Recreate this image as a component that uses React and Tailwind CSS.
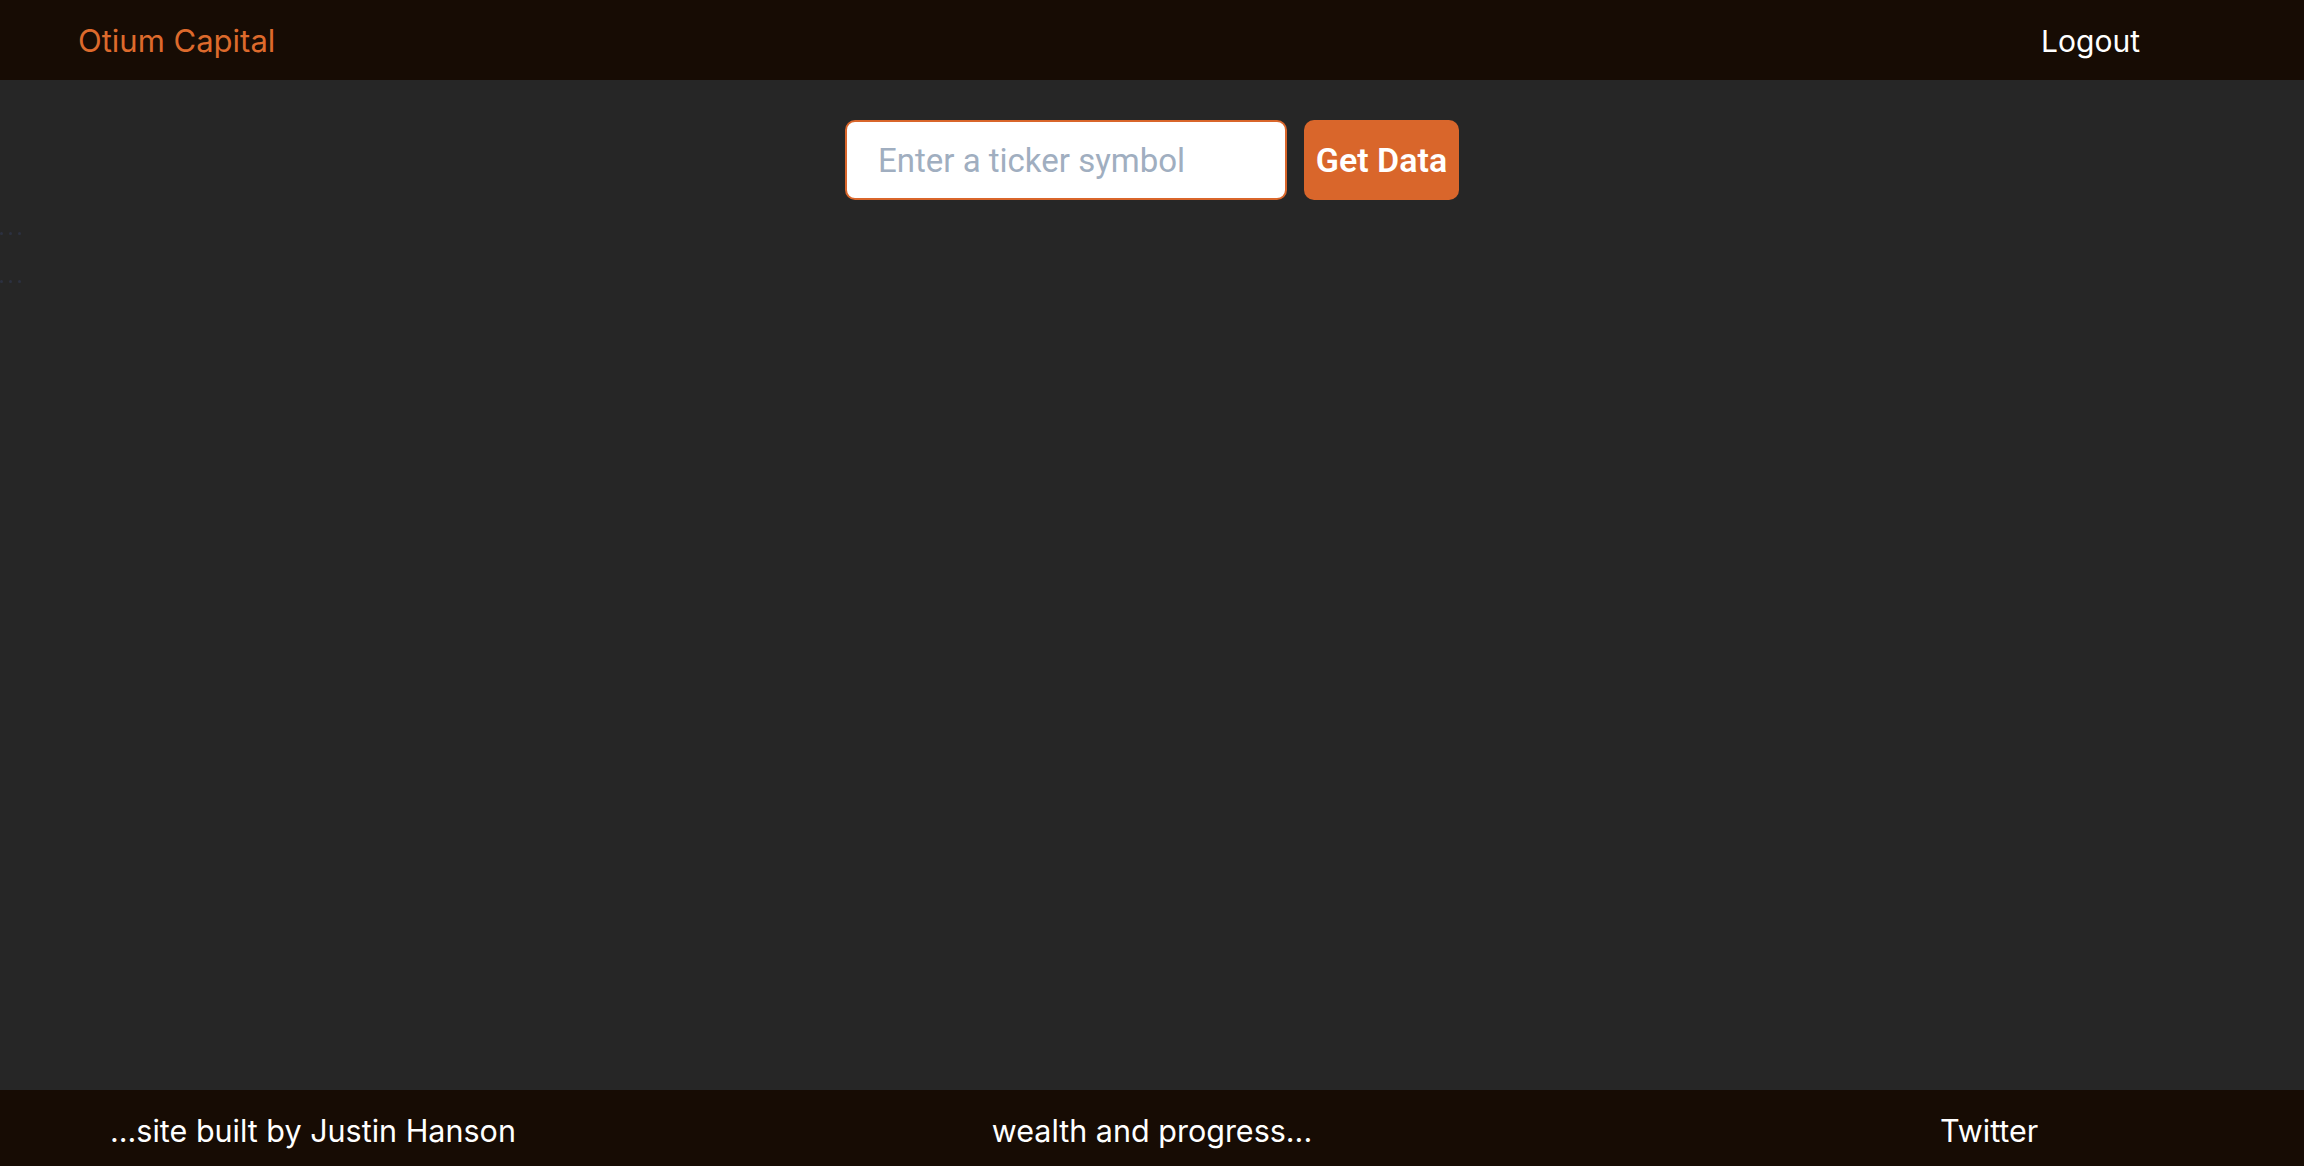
export default function App() {
    return (
        <div className="flex min-h-screen flex-col bg-[#262626] font-['Inter',sans-serif]">
            {/* HEADER */}
            <header className="flex h-[80px] items-center justify-between bg-[#170c04] pl-[78px] pr-[164px] pt-[2px]">
                <a className="text-[31px] font-normal text-[#dd6a2c]">Otium Capital</a>
                <a className="text-[30px] font-normal text-white">Logout</a>
            </header>

            {/* MAIN */}
            <main className="relative flex-1 pt-[40px]">
                <div className="absolute left-0 top-[152px] flex gap-[6px]">
                    <span className="h-[3px] w-[3px] rounded-full bg-[#2c3140]" />
                    <span className="h-[3px] w-[3px] rounded-full bg-[#2c3140]" />
                    <span className="h-[3px] w-[3px] rounded-full bg-[#2c3140]" />
                </div>
                <div className="absolute left-0 top-[200px] flex gap-[6px]">
                    <span className="h-[3px] w-[3px] rounded-full bg-[#2c3140]" />
                    <span className="h-[3px] w-[3px] rounded-full bg-[#2c3140]" />
                    <span className="h-[3px] w-[3px] rounded-full bg-[#2c3140]" />
                </div>

                <form className="flex items-center justify-center gap-[17px]" onSubmit={(e) => e.preventDefault()}>
                    <input
                        type="text"
                        placeholder="Enter a ticker symbol"
                        className="h-[80px] w-[442px] rounded-[10px] border-2 border-[#d9662b] bg-white px-[31px] font-['Roboto',sans-serif] text-[33px] text-gray-700 placeholder:text-[#a0aec0] focus:outline-none"
                    />
                    <button
                        type="submit"
                        className="h-[80px] w-[155px] rounded-[10px] bg-[#d9662b] font-['Roboto',sans-serif] text-[34px] font-semibold text-white"
                    >
                        Get Data
                    </button>
                </form>
            </main>

            {/* FOOTER */}
            <footer className="grid h-[76px] grid-cols-3 items-center bg-[#170c04] pt-[6px] text-[30.5px] text-white">
                <span className="pl-[110px]">...site built by Justin Hanson</span>
                <span className="text-center">wealth and progress...</span>
                <span className="pl-[404px]">Twitter</span>
            </footer>
        </div>
    );
}
